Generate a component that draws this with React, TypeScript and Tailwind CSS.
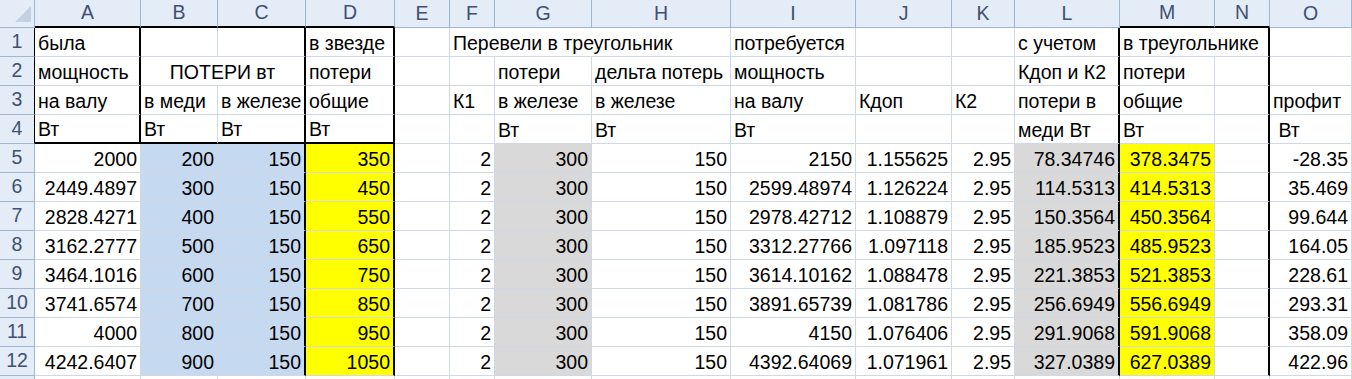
import React from 'react';

type Cell = { t?: string; span?: number; align?: 'l' | 'r' | 'c'; bg?: string };

const COLS = ['A', 'B', 'C', 'D', 'E', 'F', 'G', 'H', 'I', 'J', 'K', 'L', 'M', 'N', 'O'];

// header rows 1-4, keyed by column letter
const headerRows: Record<string, Cell>[] = [
  {
    A: { t: 'была' },
    D: { t: 'в звезде' },
    F: { t: 'Перевели в треугольник', span: 3 },
    I: { t: 'потребуется' },
    L: { t: 'с учетом' },
    M: { t: 'в треугольнике', span: 2 },
  },
  {
    A: { t: 'мощность' },
    B: { t: 'ПОТЕРИ вт', span: 2, align: 'c' },
    D: { t: 'потери' },
    G: { t: 'потери' },
    H: { t: 'дельта потерь' },
    I: { t: 'мощность' },
    L: { t: 'Кдоп и К2' },
    M: { t: 'потери' },
  },
  {
    A: { t: 'на валу' },
    B: { t: 'в меди' },
    C: { t: 'в железе' },
    D: { t: 'общие' },
    F: { t: 'К1' },
    G: { t: 'в железе' },
    H: { t: 'в железе' },
    I: { t: 'на валу' },
    J: { t: 'Кдоп' },
    K: { t: 'К2' },
    L: { t: 'потери в' },
    M: { t: 'общие' },
    O: { t: 'профит' },
  },
  {
    A: { t: 'Вт' },
    B: { t: 'Вт' },
    C: { t: 'Вт' },
    D: { t: 'Вт' },
    G: { t: 'Вт' },
    H: { t: 'Вт' },
    I: { t: 'Вт' },
    L: { t: 'меди Вт' },
    M: { t: 'Вт' },
    O: { t: '\u00a0Вт' },
  },
];

// rows 5-12: A B C D F G H I J K L M O
const data: string[][] = [
  ['2000', '200', '150', '350', '2', '300', '150', '2150', '1.155625', '2.95', '78.34746', '378.3475', '-28.35'],
  ['2449.4897', '300', '150', '450', '2', '300', '150', '2599.48974', '1.126224', '2.95', '114.5313', '414.5313', '35.469'],
  ['2828.4271', '400', '150', '550', '2', '300', '150', '2978.42712', '1.108879', '2.95', '150.3564', '450.3564', '99.644'],
  ['3162.2777', '500', '150', '650', '2', '300', '150', '3312.27766', '1.097118', '2.95', '185.9523', '485.9523', '164.05'],
  ['3464.1016', '600', '150', '750', '2', '300', '150', '3614.10162', '1.088478', '2.95', '221.3853', '521.3853', '228.61'],
  ['3741.6574', '700', '150', '850', '2', '300', '150', '3891.65739', '1.081786', '2.95', '256.6949', '556.6949', '293.31'],
  ['4000', '800', '150', '950', '2', '300', '150', '4150', '1.076406', '2.95', '291.9068', '591.9068', '358.09'],
  ['4242.6407', '900', '150', '1050', '2', '300', '150', '4392.64069', '1.071961', '2.95', '327.0389', '627.0389', '422.96'],
];

const fills: Record<string, string> = {
  B: 'bg-[#c5d9f1]',
  C: 'bg-[#c5d9f1]',
  D: 'bg-[#ffff00]',
  G: 'bg-[#d9d9d9]',
  L: 'bg-[#d9d9d9]',
  M: 'bg-[#ffff00]',
};

function dataRow(vals: string[]): Record<string, Cell> {
  const keys = ['A', 'B', 'C', 'D', 'F', 'G', 'H', 'I', 'J', 'K', 'L', 'M', 'O'];
  const row: Record<string, Cell> = {};
  keys.forEach((k, i) => {
    row[k] = { t: vals[i], align: 'r', bg: fills[k] };
  });
  row.E = {};
  row.N = {};
  return row;
}

function thickRight(row: number, col: string) {
  if (row > 12) return false;
  if (col === 'A') return row <= 4;
  return col === 'C' || col === 'D' || col === 'L' || col === 'N';
}

function rightClass(row: number, col: string) {
  return thickRight(row, col) ? 'border-r-2 border-r-black' : 'border-r border-r-[#d0d7e5]';
}

function bottomClass(row: number, col: string) {
  if (row === 4 && ['A', 'B', 'C', 'D'].includes(col)) return 'border-b-2 border-b-black';
  return 'border-b border-b-[#d0d7e5]';
}

const HEAD_TOP_BLACK = ['A', 'B', 'C', 'D', 'M', 'N'];

export default function App() {
  const rows: Record<string, Cell>[] = [...headerRows, ...data.map(dataRow), {}];

  const cells: React.ReactNode[] = [];

  // corner
  cells.push(
    <div key="corner" className="relative bg-[#e4ecf7] border-r border-b border-[#9eb6ce]">
      <svg className="absolute inset-0" width="35" height="28" viewBox="0 0 35 28">
        <polygon points="31,6 31,22 15,22" fill="#c4d1e2" />
      </svg>
    </div>
  );

  // column headers
  COLS.forEach((c) => {
    cells.push(
      <div
        key={'h' + c}
        className={`flex items-center justify-center bg-[#e4ecf7] text-[#3e5170] border-r border-r-[#9eb6ce] ${
          HEAD_TOP_BLACK.includes(c) ? 'border-b-2 border-b-black' : 'border-b border-b-[#9eb6ce]'
        }`}
      >
        {c}
      </div>
    );
  });

  rows.forEach((row, ri) => {
    const r = ri + 1;
    cells.push(
      <div
        key={'r' + r}
        className={`flex items-center justify-center bg-[#e4ecf7] text-[#3e5170] border-b border-b-[#9eb6ce] ${
          r <= 4 ? 'border-r border-r-black' : 'border-r border-r-[#9eb6ce]'
        }`}
      >
        {r <= 12 ? r : ''}
      </div>
    );
    let skip = 0;
    COLS.forEach((c, ci) => {
      if (skip > 0) {
        skip--;
        return;
      }
      const cell = row[c] || {};
      const span = cell.span || 1;
      skip = span - 1;
      const last = COLS[ci + span - 1];
      const bg = cell.bg;
      const justify =
        cell.align === 'r' ? 'justify-end pr-[3px]' : cell.align === 'c' ? 'justify-center' : 'justify-start pl-[3px]';
      cells.push(
        <div
          key={c + r}
          style={span > 1 ? { gridColumn: `span ${span}` } : undefined}
          className={`flex items-end overflow-hidden whitespace-nowrap pb-[2px] leading-[22px] ${justify} ${rightClass(
            r,
            last
          )} ${bottomClass(r, c)} ${bg || ''}`}
        >
          {cell.t}
        </div>
      );
    });
  });

  return (
    <div className="h-[379px] w-[1352px] overflow-hidden bg-white">
      <div
        className="grid grid-cols-[35px_106px_77px_88px_89px_55px_45px_97px_139px_125px_96px_63px_105px_95px_55px_82px] grid-rows-[28px_repeat(13,29px)] text-[19.5px] text-black"
        style={{ fontFamily: '"Liberation Sans", Arial, sans-serif' }}
      >
        {cells}
      </div>
    </div>
  );
}
